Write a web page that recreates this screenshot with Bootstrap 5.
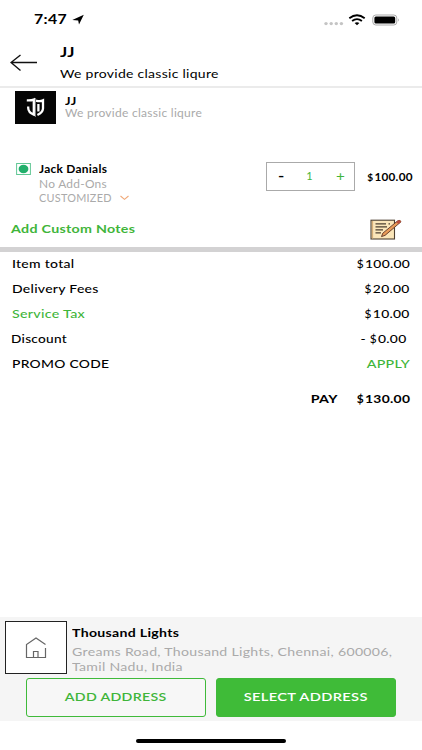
<!DOCTYPE html>
<html lang="en">
<head>
<meta charset="utf-8">
<meta name="viewport" content="width=device-width, initial-scale=1">
<title>JJ - Cart</title>
<link href="https://cdn.jsdelivr.net/npm/bootstrap@5.3.0/dist/css/bootstrap.min.css" rel="stylesheet">
<style>
  body { font-family: Lato, "Open Sans", sans-serif; font-size: 12.5px; color: #000; letter-spacing: .25px; }
  .screen { width: 422px; height: 750px; overflow: hidden; }
  svg { display: block; flex: none; }
  /* wide lettering: --s is the horizontal stretch, --v the vertical one */
  .wd { display: inline-block; white-space: nowrap; transform: scale(var(--s, 1.12), var(--v, .97)); transform-origin: left center; }
  .wd-end { transform-origin: right center; }
  .wd-mid { transform-origin: center; }
  .s102 { --s: 1.035; } .s106 { --s: 1.065; } .s107 { --s: 1.083; } .s108 { --s: 1.083; } .s109 { --s: 1.093; }
  .s110 { --s: 1.11; } .s114 { --s: 1.14; } .s117 { --s: 1.176; } .s122 { --s: 1.22; } .s130 { --s: 1.3; }
  .tone-grey { color: #aaa; }
  .tone-green { color: #3fb53a; }
  .status { height: 39px; padding: 0 22px 0 34px; }
  .status-arrow { margin-left: 11px; }
  .status-battery { margin-left: 6px; }
  .topbar { height: 49px; border-bottom: 2px solid #ebebeb; padding: 0 0 0 10px; }
  .topbar-text { margin-left: 22px; }
  .ln-22 { line-height: 22px; } .ln-15 { line-height: 15px; } .ln-12 { line-height: 12px; } .ln-14 { line-height: 14.5px; }
  .fs-a { font-size: 13px; --v: 1; } .fs-b { font-size: 11px; --v: 1; } .fs-c { font-size: 10.5px; --v: 1; } .fs-d { font-size: 12px; }
  .shop { height: 74px; padding: 3px 0 0 15px; }
  .shop-logo { width: 41px; height: 33px; background: #050505; }
  .shop-text { margin-left: 9px; padding-top: 4px; }
  .item { height: 54px; padding-left: 16px; }
  .item-text { margin-left: 8px; width: 100px; }
  .stepper { width: 89px; height: 29px; border: 1px solid #aaa; margin-left: 127px; padding: 0 10px 0 11px; }
  .item-price { width: 58px; padding-top: 6px; }
  .notes { height: 32px; padding: 0 20px 5px 11px; }
  .rule { height: 5px; margin-top: -1px; background: #d3d2d3; }
  .bill { font-weight: 500; }
  .bill > div { height: 25px; padding: 0 12px; }
  .bill .dsc { padding: 0 15px 0 11px; }
  .bill .pay { height: 45px; }
  .cur { font-size: .86em; margin-right: 1px; }
  .address { height: 104px; background: #f5f5f5; }
  .place { height: 61px; padding: 4px 0 0 5px; }
  .place-text { margin: 1px 0 0 5px; }
  .home-box { width: 62px; height: 53px; border: 1px solid #222; background: #fff; }
  .cta-row { gap: 10px; }
  .cta { height: 39px; width: 180px; border-radius: 3px; border: 1px solid #3fba3a; font-size: 12.5px; font-weight: 600; padding: 0; letter-spacing: .25px; }
  .cta-line, .cta-line:hover { background: #f7f7f7; color: #3fb53a; }
  .cta-fill, .cta-fill:hover { background: #3fbb38; color: #fff; }
  .foot { height: 29px; padding-top: 18px; }
  .home-bar { width: 150px; height: 4px; border-radius: 2px; background: #000; }
</style>
</head>
<body class="bg-white">
<div class="screen d-flex flex-column">
  <div class="status d-flex align-items-center">
    <span class="wd s122 fs-a fw-bold">7:47</span>
    <svg class="status-arrow" width="12" height="12" viewBox="0 0 12 12"><path d="M11.800.8 7 10.500 6.200 6.500.3 6.100z" fill="#000"/></svg>
    <svg class="ms-auto" width="20" height="12" viewBox="0 0 20 12"><g fill="#c4c4c4"><circle cx="2" cy="9.600" r="1.700"/><circle cx="7.200" cy="9.600" r="1.700"/><circle cx="12.300" cy="9.600" r="1.700"/><circle cx="17.400" cy="9.600" r="1.700"/></g></svg>
    <svg class="ms-1" width="18" height="12" viewBox="0 0 18 12"><g fill="none" stroke="#000" stroke-width="1.900"><path d="M1.300 4.200Q9 -1.600 16.700 4.200"/><path d="M4.100 7Q9 3.300 13.900 7"/></g><path d="M6.600 9Q9 7.400 11.400 9L9 11.200z"/></svg>
    <svg class="status-battery" width="28" height="12" viewBox="0 0 28 12"><rect x=".8" y="1" width="24" height="10" rx="3" fill="#fff" stroke="#aaa"/><rect x="2.400" y="2.500" width="20.800" height="7" rx="1.500"/><path d="M26 4.300q1.600 1.700 0 3.400z" fill="#999"/></svg>
  </div>
  <header class="topbar d-flex align-items-center">
    <svg width="28" height="18" viewBox="0 0 28 18"><path d="M27 8.500H1M10.500 1 1 8.500l9.500 8" fill="none" stroke="#111" stroke-width="1.400"/></svg>
    <div class="topbar-text d-flex flex-column align-items-start">
      <span class="wd s130 fs-a fw-bold ln-22">JJ</span>
      <span class="wd ln-22">We provide classic liqure</span>
    </div>
  </header>
  <section class="shop d-flex align-items-start">
    <div class="shop-logo d-flex align-items-center justify-content-center">
      <svg width="19" height="21" viewBox="0 0 19 21"><g fill="none" stroke="#fff" stroke-width="2.300"><path d="M.8 3.400Q5.500 3.600 7.800 2.600V17.600Q2.300 15.500 2.200 11V9.500"/><path d="M10 3.600Q14 4.800 17 3.400V11.500Q16.800 15.500 11.400 18M12.400 7V14.500"/></g><path d="M9.500 1V20" stroke="#aaa" stroke-width=".7"/></svg>
    </div>
    <div class="shop-text d-flex flex-column align-items-start">
      <span class="wd s117 fs-b fw-bold ln-12">JJ</span>
      <span class="wd s109 fs-b tone-grey ln-12">We provide classic liqure</span>
    </div>
  </section>
  <section class="item d-flex align-items-start">
    <svg width="15" height="14" viewBox="0 0 15 14"><rect x=".6" y="1.500" width="13.800" height="11" fill="#fff" stroke="#62c795"/><ellipse cx="7.500" cy="7" rx="4.900" ry="4.200" fill="#22af6b"/></svg>
    <div class="item-text d-flex flex-column align-items-start">
      <span class="wd s107 fs-b fw-bold ln-14">Jack Danials</span>
      <span class="wd s108 fs-b tone-grey ln-14">No Add-Ons</span>
      <span class="d-flex align-items-center ln-14"><span class="wd s102 fs-c tone-grey">CUSTOMIZED</span>
        <svg class="ms-2" width="14" height="6" viewBox="0 0 14 6"><path d="M3.500 1 7.500 4.300 11.500 1" fill="none" stroke="#f0a878" stroke-width="1.100"/></svg></span>
    </div>
    <div class="stepper d-flex align-items-center justify-content-between">
      <span class="fw-bold fs-a wd s130">-</span><span class="tone-green fs-b">1</span><span class="tone-green fs-a wd s117">+</span>
    </div>
    <div class="item-price text-end"><span class="wd wd-end s106 fs-b fw-bold"><span class="cur">$</span>100.00</span></div>
  </section>
  <section class="notes d-flex align-items-center justify-content-between">
    <span class="wd s114 fw-bold tone-green">Add Custom Notes</span>
    <svg width="32" height="22" viewBox="0 0 32 22"><rect x="1" y="1.200" width="23.500" height="18.800" fill="#fbe6b9" stroke="#4e4032" stroke-width="1.100"/><path d="M2.600 2V19.500" stroke="#d3a871"/><path d="M5.500 4.800H16M18.500 4.800h1.500M5.500 7.800H17M5.500 10.800H13M5.500 13.800H11" stroke="#4e4032" stroke-width="1.200"/><path d="M11.500 17.600 12.800 14.200 27.600 1.900Q30.500.4 31 2.800L15 16.400z" fill="#e99b58" stroke="#5c3526" stroke-width=".9"/><path d="m26 3.200 2-1.600Q30.500.4 31 2.800L28.500 5.100z" fill="#bb4d3d"/></svg>
  </section>
  <div class="rule"></div>
  <section class="bill">
    <div class="d-flex align-items-center justify-content-between"><span class="wd">Item total</span><span class="wd wd-end s110"><span class="cur">$</span>100.00</span></div>
    <div class="d-flex align-items-center justify-content-between"><span class="wd">Delivery Fees</span><span class="wd wd-end s110"><span class="cur">$</span>20.00</span></div>
    <div class="d-flex align-items-center justify-content-between"><span class="wd s114 tone-green">Service Tax</span><span class="wd wd-end s110"><span class="cur">$</span>10.00</span></div>
    <div class="dsc d-flex align-items-center justify-content-between"><span class="wd s109">Discount</span><span class="wd wd-end s110">- <span class="cur">$</span>0.00</span></div>
    <div class="d-flex align-items-center justify-content-between"><span class="wd s110">PROMO CODE</span><span class="wd wd-end s114 tone-green">APPLY</span></div>
    <div class="pay d-flex align-items-center justify-content-end fw-bold"><span class="wd wd-end s114 me-4">PAY</span><span class="wd wd-end s110"><span class="cur">$</span>130.00</span></div>
  </section>
  <section class="address mt-auto">
    <div class="place d-flex align-items-start">
      <div class="home-box d-flex align-items-center justify-content-center">
        <svg width="22" height="22" viewBox="0 0 22 22"><path d="M20.500 11V20.500H1.500V7.500L11 1l9.500 6.500M8.500 20.500V14.500h4.500v6" fill="none" stroke="#666" stroke-width="1.200"/></svg>
      </div>
      <div class="place-text d-flex flex-column align-items-start fs-d">
        <span class="wd s117 fw-bold ln-22">Thousand Lights</span>
        <span class="wd s117 tone-grey ln-15">Greams Road, Thousand Lights, Chennai, 600006,</span>
        <span class="wd s117 tone-grey ln-15">Tamil Nadu, India</span>
      </div>
    </div>
    <div class="cta-row d-flex justify-content-center">
      <button class="btn cta cta-line"><span class="wd wd-mid s114">ADD ADDRESS</span></button>
      <button class="btn cta cta-fill"><span class="wd wd-mid s117">SELECT ADDRESS</span></button>
    </div>
  </section>
  <div class="foot d-flex justify-content-center"><div class="home-bar"></div></div>
</div>
<script src="https://cdn.jsdelivr.net/npm/bootstrap@5.3.0/dist/js/bootstrap.bundle.min.js"></script>
</body>
</html>
